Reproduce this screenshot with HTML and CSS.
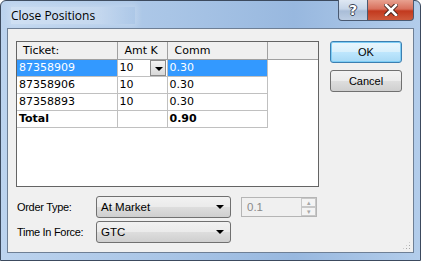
FILE: index.html
```html
<!DOCTYPE html>
<html lang="en">
<head>
    <meta charset="UTF-8">
    <title>Close Positions</title>
    <link rel="stylesheet" href="styles.css">
</head>
<body>
    <div class="window">
        <!-- Title bar -->
        <div class="titlebar">
            <span class="title">Close Positions</span>
            <div class="captions">
                <div class="capBtn helpBtn">?</div>
                <div class="capBtn closeBtn">
                    <svg width="14" height="12" viewBox="0 0 14 12">
                        <path d="M2 1 L12 11 M12 1 L2 11" stroke="#3a1a14" stroke-width="4.4" stroke-linecap="square"/>
                        <path d="M2 1 L12 11 M12 1 L2 11" stroke="#fff" stroke-width="2.6" stroke-linecap="square"/>
                    </svg>
                </div>
            </div>
        </div>

        <div class="client">
            <div class="topPart">
                <!-- Positions grid -->
                <div class="grid">
                    <table class="posTable">
                        <tr class="head">
                            <th class="colTicket">Ticket:</th>
                            <th class="colAmt">Amt K</th>
                            <th class="colComm">Comm</th>
                            <th class="colFill"></th>
                        </tr>
                        <tr class="sel">
                            <td class="blue">87358909</td>
                            <td class="editor"><span>10</span><span class="dropBtn"></span></td>
                            <td class="blue">0.30</td>
                        </tr>
                        <tr>
                            <td>87358906</td>
                            <td>10</td>
                            <td>0.30</td>
                        </tr>
                        <tr>
                            <td>87358893</td>
                            <td>10</td>
                            <td>0.30</td>
                        </tr>
                        <tr class="total">
                            <td>Total</td>
                            <td></td>
                            <td>0.90</td>
                        </tr>
                    </table>
                </div>

                <div class="buttons">
                    <div class="btn btnDefault">OK</div>
                    <div class="btn">Cancel</div>
                </div>
            </div>

            <!-- Order options -->
            <div class="options">
                <div class="optRow">
                    <span class="optLabel">Order Type:</span>
                    <div class="combo"><span>At Market</span><span class="arrow"></span></div>
                    <div class="spinner">
                        <span class="spinVal">0.1</span>
                        <div class="spinBtns">
                            <div class="spinBtn">&#9652;</div>
                            <div class="spinBtn">&#9662;</div>
                        </div>
                    </div>
                </div>
                <div class="optRow">
                    <span class="optLabel">Time In Force:</span>
                    <div class="combo"><span>GTC</span><span class="arrow"></span></div>
                </div>
            </div>

            <div class="grip"></div>
        </div>
    </div>
</body>
</html>
```

FILE: styles.css
```css
* {
    margin: 0;
    padding: 0;
    box-sizing: border-box;
}

body {
    width: 421px;
    height: 261px;
    overflow: hidden;
    background: #ffffff;
    font-family: "Liberation Sans", Arial, sans-serif;
    font-size: 11px;
}

.window {
    width: 421px;
    height: 261px;
    display: flex;
    flex-direction: column;
    border: 1px solid #3c4a5e;
    border-radius: 6px 6px 0 0;
    background: linear-gradient(to right, #bcd3ee 0%, #a9c5e6 40%, #98b8df 70%, #b3cdeb 100%);
}

.titlebar {
    height: 27px;
    display: flex;
    align-items: flex-start;
    padding: 0 6px 0 10px;
}

.title {
    margin-top: 6px;
    font-family: "Open Sans", "Noto Sans", sans-serif;
    font-size: 12px;
    color: #000;
    padding: 0 40px 0 0;
    background: linear-gradient(to right, rgba(255,255,255,0.3), rgba(255,255,255,0.25) 70%, rgba(255,255,255,0));
    box-shadow: 0 0 6px 3px rgba(255,255,255,0.2);
}

.captions {
    margin-left: auto;
    display: flex;
    margin-top: -1px;
}

.capBtn {
    height: 21px;
    border: 1px solid #4a5a72;
    border-top: none;
    display: flex;
    align-items: center;
    justify-content: center;
}

.helpBtn {
    width: 29px;
    border-radius: 0 0 0 4px;
    border-right: none;
    background: linear-gradient(to bottom, #dfe8f3 0%, #c6d5e8 45%, #a9bdd7 55%, #bccde3 100%);
    font-family: "DejaVu Sans", sans-serif;
    font-weight: bold;
    font-size: 14px;
    color: #fff;
    text-shadow: 1px 0 #3a4455, -1px 0 #3a4455, 0 1px #3a4455, 0 -1px #3a4455;
}

.closeBtn {
    width: 47px;
    border-radius: 0 0 4px 0;
    background: linear-gradient(to bottom, #e8a190 0%, #d8705c 45%, #c2391e 55%, #cf5a3c 100%);
}

.client {
    flex: 1;
    position: relative;
    margin: 0 6px 7px 6px;
    background: #f0f0f0;
    border: 1px solid #6e7f95;
    padding: 12px 0 0 8px;
}

.topPart {
    display: flex;
    align-items: flex-start;
}

.grid {
    width: 303px;
    height: 146px;
    border: 1px solid #646464;
    background: #fff;
}

.posTable {
    border-collapse: collapse;
    font-family: "DejaVu Sans", Verdana, sans-serif;
    font-size: 11px;
    color: #000;
}

.posTable th,
.posTable td {
    height: 17px;
    padding: 0 0 0 2px;
    text-align: left;
    font-weight: normal;
    border: 1px solid #c0c0c0;
    border-top: none;
    border-left: none;
    white-space: nowrap;
}

.head th {
    background: #f0f0f0;
    border-right: 1px solid #a0a0a0;
    border-bottom: 1px solid #a0a0a0;
    padding-left: 6px;
}

.head .colFill {
    border-right: none;
}

.colTicket { width: 100px; }
.colAmt { width: 50px; }
.colComm { width: 100px; }
.colFill { width: 51px; }

.head .colAmt,
.head .colComm {
    padding-left: 7px;
}

.posTable td.blue {
    background: #3399ff;
    color: #fff;
}

.editor {
    position: relative;
}

.dropBtn {
    position: absolute;
    right: 1px;
    top: 0;
    width: 16px;
    height: 16px;
    border: 1px solid #8a8a8a;
    background: linear-gradient(to bottom, #f4f4f4, #d8d8d8);
}

.dropBtn::after {
    content: "";
    position: absolute;
    left: 4px;
    top: 6px;
    border-left: 4px solid transparent;
    border-right: 4px solid transparent;
    border-top: 4px solid #000;
}

.total td {
    font-weight: bold;
}

.buttons {
    margin-left: 11px;
    display: flex;
    flex-direction: column;
    gap: 7px;
}

.btn {
    width: 72px;
    height: 22px;
    border: 1px solid #707070;
    border-radius: 3px;
    background: linear-gradient(to bottom, #f2f2f2 0%, #ebebeb 48%, #dddddd 52%, #cfcfcf 100%);
    display: flex;
    align-items: center;
    justify-content: center;
    color: #000;
}

.btnDefault {
    border-color: #3c7fb1;
    background: linear-gradient(to bottom, #eaf6fd 0%, #d9f0fc 48%, #bee6fd 52%, #a7d9f5 100%);
    box-shadow: inset 0 0 0 1px #7ecdf5;
}

.options {
    margin-top: 9px;
    display: flex;
    flex-direction: column;
    gap: 3px;
}

.optRow {
    display: flex;
    align-items: center;
}

.optLabel {
    width: 80px;
    padding-left: 1px;
    color: #000;
    letter-spacing: -0.3px;
}

.combo {
    width: 135px;
    height: 22px;
    border: 1px solid #707070;
    border-radius: 3px;
    background: linear-gradient(to bottom, #f2f2f2 0%, #ebebeb 48%, #dddddd 52%, #cfcfcf 100%);
    display: flex;
    align-items: center;
    padding: 0 6px 0 4px;
    font-size: 11.5px;
}

.arrow {
    margin-left: auto;
    border-left: 4px solid transparent;
    border-right: 4px solid transparent;
    border-top: 4px solid #000;
}

.spinner {
    margin-left: 10px;
    width: 76px;
    height: 20px;
    border: 1px solid #b5b5b5;
    display: flex;
    align-items: center;
    background: #f0f0f0;
}

.spinVal {
    padding-left: 5px;
    color: #8a8a8a;
    font-size: 11.5px;
}

.spinBtns {
    margin-left: auto;
    width: 15px;
    height: 18px;
    display: flex;
    flex-direction: column;
}

.spinBtn {
    height: 9px;
    border: 1px solid #c8c8c8;
    background: #f4f4f4;
    color: #a8a8a8;
    font-size: 7px;
    line-height: 7px;
    text-align: center;
}

.grip {
    position: absolute;
    right: 2px;
    bottom: 2px;
    width: 9px;
    height: 9px;
    background:
        radial-gradient(circle, #a6a6a6 0.8px, transparent 1px) 0 0 / 3px 3px;
    clip-path: polygon(100% 0, 100% 100%, 0 100%);
}
```
